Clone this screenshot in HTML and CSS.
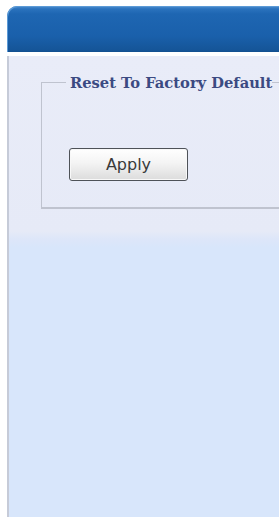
FILE: index.html
```html
<!DOCTYPE html>
<html>
<head>
  <title>Reset To Factory Default</title>
  <link rel="stylesheet" href="styles.css">
</head>
<body>
  <div class="header"></div>

  <div class="panel">
    <fieldset class="reset-box">
      <legend>Reset To Factory Default</legend>
      <button class="apply-btn">Apply</button>
    </fieldset>
  </div>
</body>
</html>
```

FILE: styles.css
```css
body {
  margin: 0;
  background: #ffffff;
  font-family: "Liberation Sans", Arial, sans-serif;
  overflow: hidden;
}

.header {
  margin: 6px 0 0 7px;
  height: 46px;
  border-radius: 10px 0 0 0;
  background: linear-gradient(to bottom, #4f8fd0 0px, #2a72bd 3px, #1e66b2 8px, #1a60ab 30px, #155598 44px, #124f8f 46px);
  box-shadow: inset 1px 1px 0 #5c9ad6;
}

.panel {
  margin: 4px 0 0 7px;
  height: 461px;
  border-left: 2px solid #c6cbd8;
  background: linear-gradient(to bottom, #e9ecf8 0px, #e6eaf7 175px, #dde6f9 183px, #d8e6fb 192px);
  overflow: hidden;
  padding-top: 18px;
  box-sizing: border-box;
}

.reset-box {
  margin: 0 -40px 0 32px;
  padding: 0 0 0 24px;
  height: 135px;
  border: 1px solid #bfc3cf;
  border-width: 1px 0 2px 1px;
  box-sizing: border-box;
}

.reset-box legend {
  padding: 0 0 0 4px;
  font-family: "DejaVu Serif", "Liberation Serif", serif;
  font-weight: bold;
  font-size: 14.7px;
  color: #3b4a82;
  white-space: nowrap;
}

.apply-btn {
  display: block;
  margin: 57px 0 0 3px;
  width: 119px;
  height: 33px;
  border: 1px solid #4e5258;
  border-radius: 3px;
  background: linear-gradient(to bottom, #ffffff 0%, #f4f4f4 45%, #dcdcdc 100%);
  box-shadow: inset 0 0 0 1px #f8f8f8;
  font-family: "DejaVu Sans", "Liberation Sans", sans-serif;
  font-size: 16px;
  color: #3a3a3a;
  padding: 0;
}
```
